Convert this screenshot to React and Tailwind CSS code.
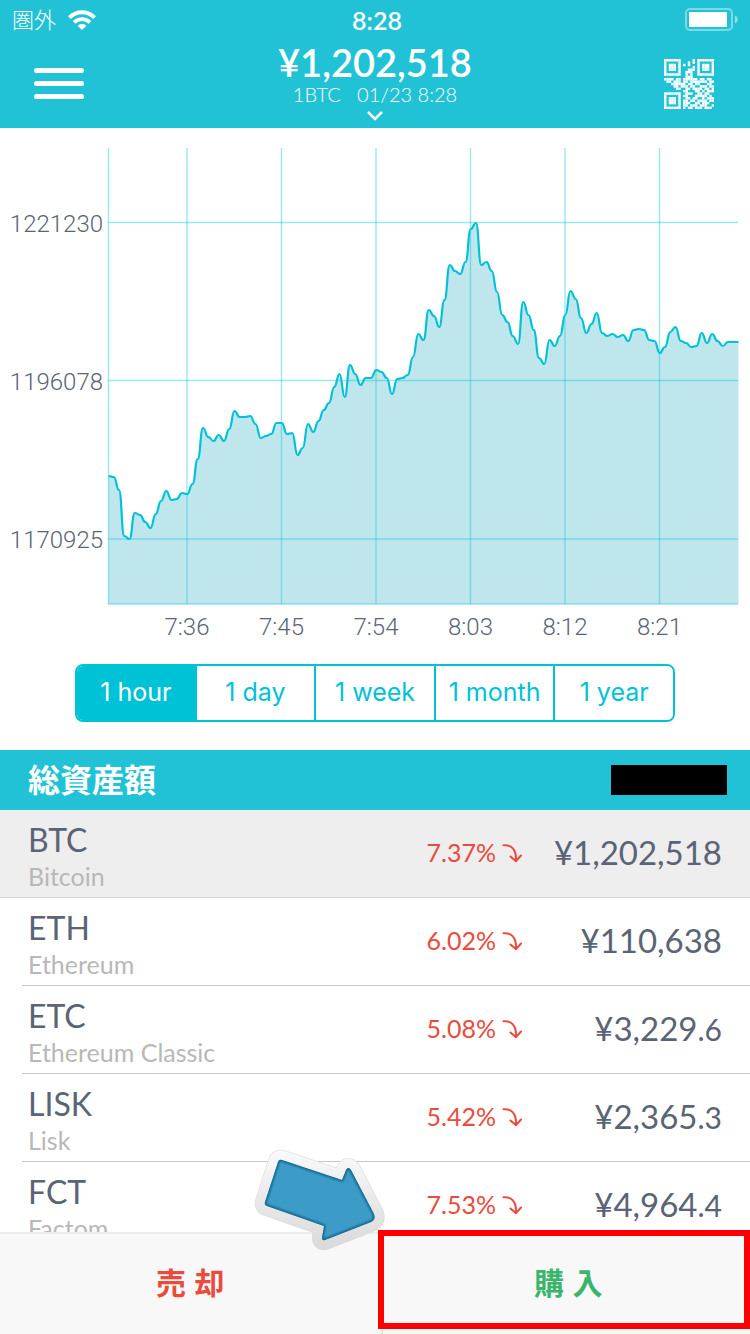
import { useState } from "react";
import clsx from "clsx";

const RANGES = ["1 hour", "1 day", "1 week", "1 month", "1 year"];

const COINS = [
    { symbol: "BTC", name: "Bitcoin", change: "7.37%", price: "¥1,202,518", decimals: "" },
    { symbol: "ETH", name: "Ethereum", change: "6.02%", price: "¥110,638", decimals: "" },
    { symbol: "ETC", name: "Ethereum Classic", change: "5.08%", price: "¥3,229", decimals: ".6" },
    { symbol: "LISK", name: "Lisk", change: "5.42%", price: "¥2,365", decimals: ".3" },
    { symbol: "FCT", name: "Factom", change: "7.53%", price: "¥4,964", decimals: ".4" },
];

// Chart geometry
const CHART = { left: 108.5, top: 20, right: 738, bottom: 476, step: 5.25 };

const Y_TICKS = [
    { label: "1221230", y: 94.5 },
    { label: "1196078", y: 252.5 },
    { label: "1170925", y: 411 },
];

const X_TICKS = [
    { label: "7:36", x: 187 },
    { label: "7:45", x: 281.5 },
    { label: "7:54", x: 376 },
    { label: "8:03", x: 470.5 },
    { label: "8:12", x: 565 },
    { label: "8:21", x: 659.5 },
];

// One sample every 30 seconds
const SAMPLES = [
    348, 349, 362, 408, 411, 385, 387, 394, 400, 386, 373, 363, 372, 371, 365,
    366, 356, 331, 300, 309, 313, 307, 313, 301, 283, 289, 289, 288, 296, 310,
    308, 306, 295, 295, 306, 305, 327, 320, 296, 304, 293, 282, 275, 259, 246,
    269, 237, 246, 257, 250, 250, 242, 244, 250, 266, 251, 250, 247, 229, 206,
    212, 182, 188, 199, 172, 137, 143, 146, 134, 101, 95, 137, 134, 143, 164,
    187, 194, 208, 216, 174, 187, 202, 230, 236, 212, 218, 208, 187, 163, 171,
    190, 205, 196, 185, 205, 208, 206, 209, 207, 213, 202, 201, 202, 212, 213,
    225, 219, 204, 199, 213, 215, 219, 218, 205, 215, 206, 213, 218, 214, 214, 214,
];

const QR_ROWS = [
    "111111100000101111111",
    "100000100010101000001",
    "101110101010001011101",
    "101110100000101011101",
    "101110100011101011101",
    "100000100111001000001",
    "111111100101001111111",
    "000000000111000000000",
    "111101101111110110110",
    "011011101101111111011",
    "000111111011011000110",
    "000011011101100111011",
    "000001100110111101101",
    "000000001100011010111",
    "111111100111001101100",
    "100000101100011111010",
    "101110100110110010111",
    "101110101101101111011",
    "101110101110011011100",
    "100000101101110111001",
    "111111101011011101110",
];

// Joins the samples with curves that are flat at every sample
const buildLine = (samples) => {
    let d = `M${CHART.left} ${samples[0]}`;
    for (let i = 1; i < samples.length; i++) {
        const x0 = CHART.left + (i - 1) * CHART.step;
        const x1 = CHART.left + i * CHART.step;
        const mid = (x0 + x1) / 2;
        d += ` C${mid} ${samples[i - 1]} ${mid} ${samples[i]} ${x1} ${samples[i]}`;
    }
    return d;
};

function WifiIcon() {
    return (
        <svg viewBox="0 0 28 20" className="w-7 h-5" fill="none" stroke="#fff" strokeWidth="3.9">
            <path d="M1.4 7.6C8.6 0.4 19.4 0.4 26.6 7.6" />
            <path d="M6 12.4C10.6 8 17.4 8 22 12.4" />
            <path d="M14 20L9.6 15.8C12 13.4 16 13.4 18.4 15.8Z" fill="#fff" stroke="none" />
        </svg>
    );
}

function BatteryIcon() {
    return (
        <svg viewBox="0 0 53 24" className="w-[53px] h-6">
            <rect x="1" y="1" width="46" height="21" rx="4" fill="none" stroke="#fff" strokeOpacity="0.4" strokeWidth="2" />
            <rect x="4" y="4" width="38" height="15" fill="#fff" />
            <path d="M50 7.5C53.6 9 53.6 14 50 15.5Z" fill="#fff" fillOpacity="0.5" />
        </svg>
    );
}

function QrIcon() {
    return (
        <svg viewBox="0 0 21 21" className="w-[50px] h-[50px]" fill="#fff">
            {QR_ROWS.map((row, y) =>
                row.split("").map((cell, x) =>
                    cell === "1" ? <rect key={`${x}-${y}`} x={x} y={y} width="1.03" height="1.03" /> : null
                )
            )}
        </svg>
    );
}

function DownIcon() {
    return (
        <svg viewBox="0 0 20 20" className="w-5 h-5" fill="none" stroke="#e94b3c" strokeWidth="2" strokeLinecap="round" strokeLinejoin="round">
            <path d="M1.5 2.2C9.5 1.6 14.5 6 14 18" />
            <path d="M8.5 13.5L14 18.2L19 12.5" />
        </svg>
    );
}

function PointerArrow() {
    const shape = "M28 11Q25 10 24 13L11 53Q10 56 13 57L70 77L68 89Q68 92 71 91L117 73Q122 71 120 65L97 21Q94 17 92 21L88 31Z";
    return (
        <svg viewBox="0 0 134 104" className="w-[134px] h-[104px]" strokeLinejoin="round">
            <defs>
                <linearGradient id="rim" x1="0" y1="0" x2="0" y2="1">
                    <stop offset="0" stopColor="#fafafa" />
                    <stop offset="1" stopColor="#d8d8d8" />
                </linearGradient>
                <mask id="rimMask">
                    <path d={shape} fill="#fff" stroke="#fff" strokeWidth="19" />
                </mask>
                <clipPath id="inner">
                    <path d={shape} />
                </clipPath>
                <filter id="soft">
                    <feGaussianBlur stdDeviation="1.2" />
                </filter>
            </defs>
            <path d={shape} fill="none" stroke="#d6d6d6" strokeWidth="20" />
            <rect width="134" height="104" fill="url(#rim)" mask="url(#rimMask)" />
            <path d={shape} fill="#3c9bc7" />
            <g clipPath="url(#inner)">
                <path d={shape} fill="none" stroke="#0f6288" strokeWidth="3" filter="url(#soft)" />
            </g>
        </svg>
    );
}

function PriceChart() {
    const line = buildLine(SAMPLES);
    const area = `${line} V${CHART.bottom} H${CHART.left} Z`;
    return (
        <svg viewBox="0 0 750 520" className="block w-full font-['Roboto','Liberation_Sans',sans-serif] font-light" role="img" aria-label="BTC 1 hour">
            <path d={area} fill="#bfe6ed" />
            <g stroke="#00c2d7" strokeOpacity="0.4" strokeWidth="1.4">
                <path d={`M${CHART.left} ${CHART.top}V${CHART.bottom}H${CHART.right}`} fill="none" />
                {X_TICKS.map((tick) => (
                    <line key={tick.label} x1={tick.x} x2={tick.x} y1={CHART.top} y2={CHART.bottom} />
                ))}
                {Y_TICKS.map((tick) => (
                    <line key={tick.label} x1={CHART.left} x2={CHART.right} y1={tick.y} y2={tick.y} />
                ))}
            </g>
            <path d={line} fill="none" stroke="#00c2d7" strokeWidth="2.2" />
            <g fill="#5a6475" fontSize="24">
                {Y_TICKS.map((tick) => (
                    <text key={tick.label} x="103" y={tick.y + 9} textAnchor="end">{tick.label}</text>
                ))}
                {X_TICKS.map((tick) => (
                    <text key={tick.label} x={tick.x} y="507" textAnchor="middle">{tick.label}</text>
                ))}
            </g>
        </svg>
    );
}

export default function App() {
    const [range, setRange] = useState("1 hour");
    const [selected, setSelected] = useState("BTC");

    return (
        <div className="flex h-screen flex-col overflow-hidden bg-white font-['Lato','Noto_Sans_CJK_JP',sans-serif] text-[#5a6475]">
            {/* Status bar and current price */}
            <header className="shrink-0 bg-[#22c2d6] text-white">
                <div className="grid h-10 grid-cols-3 items-center px-3">
                    <div className="flex items-center gap-3">
                        <span className="text-[22px] leading-10 font-light">圏外</span>
                        <WifiIcon />
                    </div>
                    <span className="pl-1 text-center text-[25px] leading-10 font-semibold">8:28</span>
                    <div className="flex justify-end">
                        <BatteryIcon />
                    </div>
                </div>
                <div className="grid h-22 grid-cols-3 items-start px-8">
                    <button type="button" aria-label="メニュー" className="mt-7 ml-0.5 flex w-[50px] flex-col gap-2">
                        <span className="h-[5px] rounded-full bg-white" />
                        <span className="h-[5px] rounded-full bg-white" />
                        <span className="h-[5px] rounded-full bg-white" />
                    </button>
                    <button type="button" className="flex flex-col items-center">
                        <span className="text-[38px] leading-11 font-semibold">¥1,202,518</span>
                        <span className="text-xl leading-5 font-light whitespace-pre">1BTC   01/23 8:28</span>
                        <svg viewBox="0 0 18 10" className="mt-[7px] h-2.5 w-[18px]" fill="none" stroke="#fff" strokeWidth="2.6">
                            <path d="M2 1L9 8L16 1" />
                        </svg>
                    </button>
                    <button type="button" aria-label="QR" className="mt-[19px] mr-1 justify-self-end">
                        <QrIcon />
                    </button>
                </div>
            </header>

            <PriceChart />

            {/* Range switch */}
            <div className="mx-auto mt-4 mb-7 flex h-[58px] w-4/5 shrink-0 divide-x-2 divide-[#00c2d7] overflow-hidden rounded-lg border-2 border-[#00c2d7] font-['Inter',sans-serif]">
                {RANGES.map((item) => (
                    <button
                        key={item}
                        type="button"
                        onClick={() => setRange(item)}
                        className={clsx(
                            "flex-1 basis-0 text-[25px] whitespace-nowrap",
                            range === item ? "bg-[#00c2d7] text-white" : "bg-white text-[#00c2d7]"
                        )}
                    >
                        {item}
                    </button>
                ))}
            </div>

            <div className="flex h-15 shrink-0 items-center justify-between bg-[#22c2d6] pr-[23px] pl-7">
                <h2 className="text-[32px] leading-none font-bold text-white">総資産額</h2>
                <span className="h-[30px] w-[116px] bg-black" />
            </div>

            {/* Coin list */}
            <ul className="min-h-0 flex-1 overflow-hidden">
                {COINS.map((coin) => (
                    <li key={coin.symbol} className={clsx(selected === coin.symbol ? "bg-[#eeeeee]" : "pl-[22px]")}>
                        <button
                            type="button"
                            onClick={() => setSelected(coin.symbol)}
                            className={clsx(
                                "flex h-22 w-full items-center border-b pr-7 text-left",
                                selected === coin.symbol ? "border-[#d6d6d6] pl-7" : "border-[#c8c8cb] pl-1.5"
                            )}
                        >
                            <span className="flex flex-1 flex-col pt-1">
                                <span className="text-[32px] leading-10">{coin.symbol}</span>
                                <span className="text-[25px] leading-8 text-[#b8b8b8]">{coin.name}</span>
                            </span>
                            <span className="flex items-center gap-1.5 pb-0.5 text-[25px] text-[#e94b3c]">
                                {coin.change}
                                <DownIcon />
                            </span>
                            <span className="w-[200px] pb-0.5 text-right text-[33px]">
                                {coin.price}
                                <span className="text-[30px]">{coin.decimals}</span>
                            </span>
                        </button>
                    </li>
                ))}
            </ul>

            {/* Sell / buy */}
            <footer className="relative flex h-[102px] shrink-0 border-t-2 border-[#ececec] bg-[#f8f8f8] font-['Liberation_Sans','Noto_Sans_CJK_JP',sans-serif] text-[30px] font-bold">
                <button type="button" className="w-[51%] border-r-2 border-[#e6e6e6] pb-0.5 text-[#e94b3c]">売 却</button>
                <button type="button" className="flex-1 pb-0.5 pl-1 text-[#3cb56c]">購 入</button>
                <div className="pointer-events-none absolute -top-1 right-0 bottom-[5px] left-[378px] border-6 border-[#ff0000]" />
                <div className="pointer-events-none absolute -top-[85px] left-[254px]">
                    <PointerArrow />
                </div>
            </footer>
        </div>
    );
}
